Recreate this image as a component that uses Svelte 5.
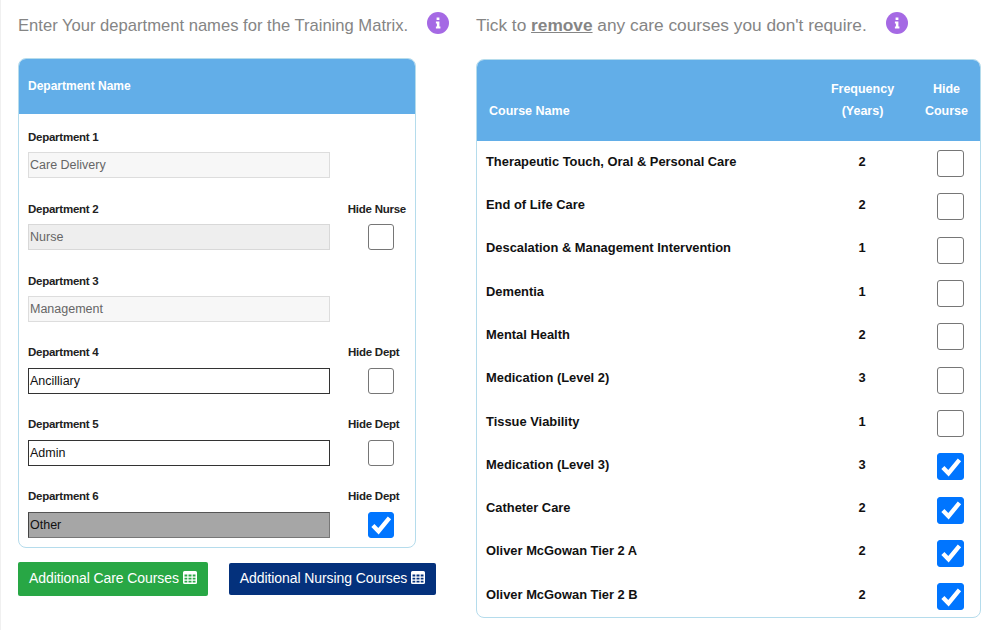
<script>
  const depts = [
    { label: 'Department 1', value: 'Care Delivery', kind: 'locked' },
    { label: 'Department 2', value: 'Nurse', kind: 'nurse', hide: 'Hide Nurse' },
    { label: 'Department 3', value: 'Management', kind: 'locked' },
    { label: 'Department 4', value: 'Ancilliary', kind: 'open', hide: 'Hide Dept' },
    { label: 'Department 5', value: 'Admin', kind: 'open', hide: 'Hide Dept' },
    { label: 'Department 6', value: 'Other', kind: 'off', hide: 'Hide Dept', checked: true }
  ];
  const courses = [
    ['Therapeutic Touch, Oral & Personal Care', 2, false],
    ['End of Life Care', 2, false],
    ['Descalation & Management Intervention', 1, false],
    ['Dementia', 1, false],
    ['Mental Health', 2, false],
    ['Medication (Level 2)', 3, false],
    ['Tissue Viability', 1, false],
    ['Medication (Level 3)', 3, true],
    ['Catheter Care', 2, true],
    ['Oliver McGowan Tier 2 A', 2, true],
    ['Oliver McGowan Tier 2 B', 2, true]
  ];
</script>

{#snippet box(checked, big)}
  <span class="box" class:on={checked} class:big={big}>
    {#if checked}
      <svg viewBox="0 0 24 24" width="26" height="26"><path d="M4.500 12.500l5.200 5.200L19.800 5.500" fill="none" stroke="#fff" stroke-width="4"/></svg>
    {/if}
  </span>
{/snippet}

{#snippet info()}
  <span class="info">
    <svg viewBox="0 0 22 22" width="22" height="22"><circle cx="11" cy="11" r="11" fill="#a569e4"/><path d="M9.600 5.600h2.800v2.500H9.600zM8.900 9.600h3.500v5h1v1.800H8.900v-1.800h1v-3.200h-1z" fill="#fff"/></svg>
  </span>
{/snippet}

{#snippet grid()}
  <svg class="gl" viewBox="0 0 14 13" width="14" height="13"><path fill="#fff" fill-rule="evenodd" d="M1.500 0h11A1.500 1.500 0 0 1 14 1.500v10a1.500 1.500 0 0 1-1.500 1.500h-11A1.500 1.500 0 0 1 0 11.500v-10A1.500 1.500 0 0 1 1.500 0zM1.500 3.500v2h2.800v-2zM5.500 3.500v2h3v-2zM9.700 3.500v2h2.800v-2zM1.500 6.700v1.800h2.800v-1.800zM5.500 6.700v1.800h3v-1.800zM9.700 6.700v1.800h2.800v-1.800zM1.500 9.700v1.800h2.800v-1.800zM5.500 9.700v1.800h3v-1.800zM9.700 9.700v1.800h2.800v-1.800z"/></svg>
{/snippet}

<div class="page">
  <section class="left">
    <h2 class="intro il">Enter Your department names for the Training Matrix. {@render info()}</h2>
    <div class="panel dept">
      <div class="head">Department Name</div>
      <div class="rows">
        {#each depts as d}
          <div class="drow">
            <div class="labels">
              <span>{d.label}</span>
              {#if d.hide}<span class="hl">{d.hide}</span>{/if}
            </div>
            <div class="fields">
              <div class="input {d.kind}">{d.value}</div>
              {#if d.hide}<div class="cbcell">{@render box(d.checked, false)}</div>{/if}
            </div>
          </div>
        {/each}
      </div>
    </div>
    <div class="buttons">
      <button class="green">Additional Care Courses {@render grid()}</button>
      <button class="navy">Additional Nursing Courses {@render grid()}</button>
    </div>
  </section>

  <section class="right">
    <h2 class="intro ir">Tick to <b>remove</b> any care courses you don't require. {@render info()}</h2>
    <div class="panel courses">
      <div class="chead">
        <span class="cn">Course Name</span>
        <span class="cf">Frequency<br />(Years)</span>
        <span class="ch">Hide<br />Course</span>
      </div>
      {#each courses as c}
        <div class="crow">
          <span class="name">{c[0]}</span>
          <span class="freq">{c[1]}</span>
          <span class="tick">{@render box(c[2], true)}</span>
        </div>
      {/each}
    </div>
  </section>
</div>

<style>
  :global(body) {
    margin: 0;
    background: #fff;
    font-family: "Liberation Sans", Arial, sans-serif;
  }
  .page {
    box-sizing: border-box;
    width: 992px;
    height: 630px;
    overflow: hidden;
    border-left: 1px solid #f0f0f0;
    padding-left: 17px;
    display: flex;
    gap: 60px;
  }
  .left { width: 398px; flex: none; }
  .right { width: 505px; flex: none; }
  .intro {
    margin: 0;
    height: 58px;
    padding-top: 17px;
    box-sizing: border-box;
    line-height: 18px;
    font-weight: 400;
    color: #858585;
    white-space: nowrap;
  }
  .il { font-size: 16.6px; }
  .ir { font-size: 17.3px; padding-top: 16px; }
  .intro b { text-decoration: underline; font-weight: 700; }
  .info {
    display: inline-block;
    vertical-align: top;
    margin: -5px 0 0 14px;
    height: 22px;
  }
  .ir .info { margin: -4px 0 0 14px; }
  .panel {
    box-sizing: border-box;
    border: 1px solid #b5dcec;
    border-radius: 8px;
    overflow: hidden;
    background: #fff;
  }
  .dept { height: 490px; }
  .head {
    height: 55px;
    background: #62aee8;
    color: #fff;
    font-size: 12px;
    font-weight: 700;
    line-height: 55px;
    padding-left: 9px;
  }
  .rows { padding: 16px 9px 0; }
  .drow { height: 72px; }
  .labels {
    display: flex;
    font-size: 11.5px;
    letter-spacing: -0.25px;
    font-weight: 700;
    line-height: 14px;
    color: #222;
    height: 22px;
  }
  .drow:nth-child(n + 4) .labels { line-height: 12px; }
  .labels span:first-child { width: 200px; }
  .labels .hl { margin-left: 120px; white-space: nowrap; }
  .fields { display: flex; gap: 38px; }
  .input {
    box-sizing: border-box;
    width: 302px;
    height: 26px;
    font-size: 12.5px;
    line-height: 24px;
    padding-left: 1px;
    border: 1px solid #ddd;
    color: #666;
    background: #f7f7f7;
  }
  .input.nurse { background: #eee; border-color: #d8d8d8; }
  .input.open { background: #fff; border-color: #333; color: #111; }
  .input.off { background: #a6a6a6; border-color: #555 #777 #777 #444; color: #111; }
  .cbcell { height: 26px; }
  .box {
    box-sizing: border-box;
    display: flex;
    align-items: center;
    justify-content: center;
    width: 26px;
    height: 26px;
    border: 1px solid #767676;
    border-radius: 3px;
    background: #fff;
  }
  .box.big { width: 27px; height: 27px; }
  .box.on { background: #0075ff; border-color: #0075ff; }
  .box svg { flex: none; margin: -1px; }
  .buttons { display: flex; gap: 21px; margin-top: 14px; align-items: center; }
  button {
    font-family: inherit;
    font-size: 14px;
    letter-spacing: -0.08px;
    color: #fff;
    border-radius: 2px;
    padding: 0 10px 2px;
    white-space: nowrap;
    display: block;
    border: 1px solid transparent;
  }
  .green { background: #28a745; height: 34px; width: 190px; }
  .navy { background: #04317c; height: 32px; width: 207px; }
  .gl { vertical-align: -1px; }
  .courses { height: 559px; margin-top: 1px; }
  .chead {
    box-sizing: border-box;
    height: 81px;
    background: #62aee8;
    color: #fff;
    font-size: 12.5px;
    font-weight: 700;
    line-height: 22px;
    display: grid;
    grid-template-columns: 320.5px 106px 62px;
    align-items: end;
    padding: 0 0 19px 12px;
  }
  .cf, .ch { text-align: center; }
  .crow {
    display: grid;
    grid-template-columns: 323px 106px 1fr;
    align-items: center;
    height: 43.32px;
    padding-left: 9px;
    font-size: 12.9px;
    font-weight: 700;
    color: #111;
  }
  .name, .freq { padding-bottom: 3px; }
  .freq { text-align: center; }
  .tick { padding: 2px 0 0 22px; }
</style>
